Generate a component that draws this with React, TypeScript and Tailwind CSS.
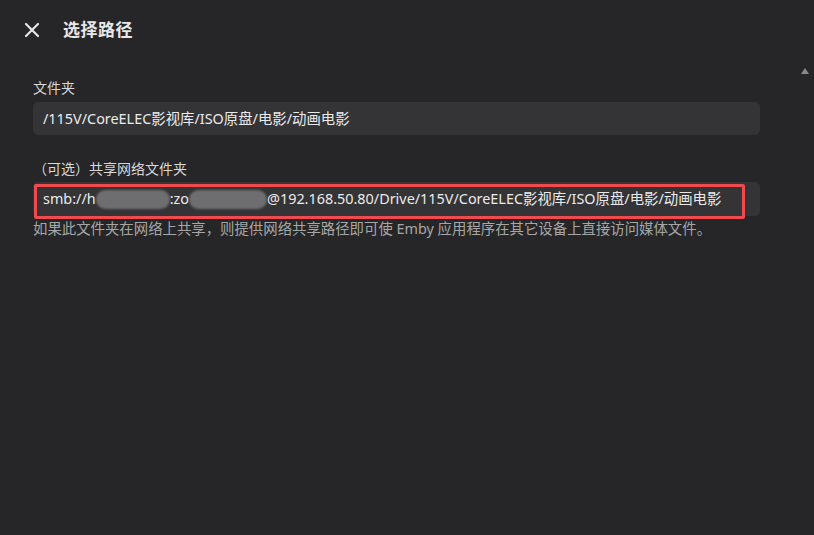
import React from "react";

export default function App() {
  const font = { fontFamily: '"Noto Sans", "Noto Sans CJK SC", sans-serif' };
  return (
    <div className="w-[814px] h-[535px] bg-[#262628] overflow-hidden relative" style={font}>
      <div className="flex items-center h-[60px] pl-[24px]">
        <svg width="16" height="16" viewBox="0 0 16 16" className="text-[#e6e6e6]">
          <path d="M2 2 L14 14 M14 2 L2 14" stroke="currentColor" strokeWidth="2.2" strokeLinecap="round" />
        </svg>
        <div className="ml-[23px] text-[17px] font-bold text-[#e8e8e8] tracking-[0.5px]">选择路径</div>
      </div>
      <div className="absolute right-[5px] top-[68px] w-0 h-0 border-l-[4px] border-r-[4px] border-b-[6px] border-l-transparent border-r-transparent border-b-[#8a8a8a]" />
      <div className="pl-[33px] pr-[54px] pt-[19px]">
        <div className="text-[14px] text-[#d8d8d8] leading-[18px] h-[23px]">文件夹</div>
        <div className="h-[33px] rounded-[5px] bg-[#343437] flex items-center px-[10px] text-[14.4px] text-[#ebebeb]">
          /115V/CoreELEC影视库/ISO原盘/电影/动画电影
        </div>
        <div className="text-[14px] text-[#d8d8d8] leading-[18px] mt-[25px] h-[22px]">（可选）共享网络文件夹</div>
        <div className="relative h-[34px] rounded-[5px] bg-[#343437] flex items-center px-[10px] text-[14.4px] text-[#ebebeb] whitespace-nowrap">
          <span>smb://h</span>
          <span className="inline-block w-[74px] h-[19px] rounded-full bg-[#6e6e70] blur-[1px]" />
          <span>:zo</span>
          <span className="inline-block w-[78px] h-[19px] rounded-full bg-[#6e6e70] blur-[1px]" />
          <span>@192.168.50.80/Drive/115V/CoreELEC影视库/ISO原盘/电影/动画电影</span>
          <div className="absolute left-[1px] top-[2px] w-[711px] h-[35px] border-[3px] border-[#f04a4f] rounded-[2px]" />
        </div>
        <div className="text-[14.4px] text-[#a6a6a6] mt-[4px] leading-[18px]">
          如果此文件夹在网络上共享，则提供网络共享路径即可使 Emby 应用程序在其它设备上直接访问媒体文件。
        </div>
      </div>
    </div>
  );
}
